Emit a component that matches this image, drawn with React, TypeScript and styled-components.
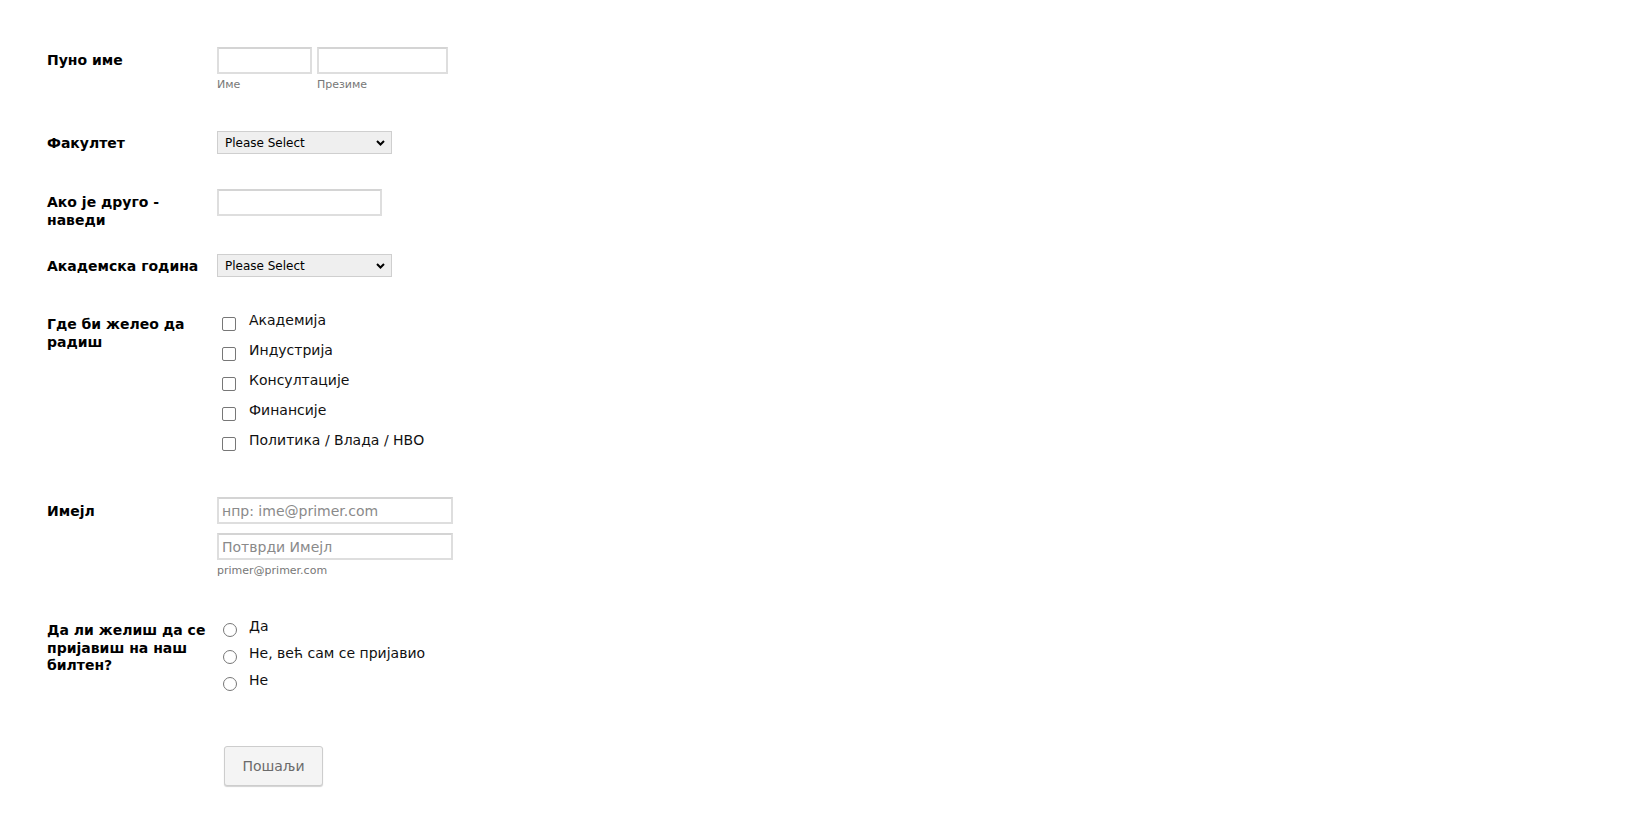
import React from "react";
import styled, { createGlobalStyle } from "styled-components";

const GlobalStyle = createGlobalStyle`
  html, body {
    margin: 0;
    padding: 0;
    background: #fff;
  }
  body {
    font-family: "DejaVu Sans", Verdana, sans-serif;
    color: #000;
  }
`;

const Form = styled.form`
  padding: 47px 0 40px 47px;
  display: flex;
  flex-direction: column;
`;

const Row = styled.div<{ $space?: number }>`
  display: flex;
  align-items: flex-start;
  margin-top: ${(p) => p.$space ?? 0}px;
`;

const Label = styled.label<{ $pad?: number }>`
  width: 160px;
  margin-right: 10px;
  padding-top: ${(p) => p.$pad ?? 5}px;
  font-size: 14px;
  line-height: 17.5px;
  font-weight: 700;
  color: #000;
`;

const Field = styled.div`
  display: flex;
  flex-direction: column;
`;

const Inline = styled.div`
  display: flex;
  gap: 5px;
`;

const Sub = styled.span`
  margin-top: 4px;
  font-size: 11px;
  line-height: 13px;
  color: #777;
`;

const TextInput = styled.input<{ $w: number }>`
  box-sizing: border-box;
  width: ${(p) => p.$w}px;
  height: 27px;
  margin: 0;
  padding: 0 3px;
  border: 2px solid #dedede;
  border-top-color: #d4d4d4;
  border-radius: 0;
  background: #fff;
  font-family: "DejaVu Sans", Verdana, sans-serif;
  font-size: 14px;
  color: #000;
  outline: none;
  &::placeholder {
    color: #8a8a8a;
  }
`;

const Stack = styled.div`
  display: flex;
  flex-direction: column;
  gap: 9px;
`;

const SelectWrap = styled.div`
  position: relative;
  width: 175px;
  height: 23px;
`;

const Select = styled.select`
  box-sizing: border-box;
  appearance: none;
  width: 100%;
  height: 100%;
  margin: 0;
  padding: 0 0 0 7px;
  border: 1px solid #cfcfcf;
  border-radius: 0;
  background: #efefef;
  font-family: "DejaVu Sans", Verdana, sans-serif;
  font-size: 12px;
  color: #000;
  outline: none;
`;

const Chevron = styled.svg`
  position: absolute;
  right: 7px;
  top: 9px;
  pointer-events: none;
`;

const Options = styled.div`
  display: flex;
  flex-direction: column;
`;

const Option = styled.label<{ $step: number }>`
  display: flex;
  align-items: flex-start;
  height: ${(p) => p.$step}px;
  font-size: 14px;
  line-height: 18px;
  color: #111;
`;

const Check = styled.span`
  box-sizing: border-box;
  flex: none;
  width: 14px;
  height: 14px;
  margin: 6px 13px 0 5px;
  border: 1px solid #777;
  border-radius: 2px;
  background: #fff;
`;

const Radio = styled.span`
  box-sizing: border-box;
  flex: none;
  width: 14px;
  height: 14px;
  margin: 6px 12px 0 6px;
  border: 1px solid #777;
  border-radius: 50%;
  background: #fff;
`;

const Submit = styled.button`
  box-sizing: border-box;
  width: 99px;
  height: 40px;
  margin-left: 7px;
  border: 1px solid #cdcdcd;
  border-radius: 3px;
  background: #f4f4f4;
  box-shadow: 0 1px 1px rgba(0, 0, 0, 0.18);
  font-family: "DejaVu Sans", Verdana, sans-serif;
  font-size: 14px;
  color: #6b6b6b;
`;

const Spacer = styled.div`
  width: 170px;
  flex: none;
`;

const DropDown: React.FC = () => (
  <SelectWrap>
    <Select defaultValue="">
      <option value="">Please Select</option>
    </Select>
    <Chevron width="9" height="6" viewBox="0 0 9 6">
      <path d="M1 1 L4.5 4.5 L8 1" fill="none" stroke="#000" strokeWidth="2" />
    </Chevron>
  </SelectWrap>
);

const jobs = [
  "Академија",
  "Индустрија",
  "Консултације",
  "Финансије",
  "Политика / Влада / НВО",
];

const news = ["Да", "Не, већ сам се пријавио", "Не"];

export default function App() {
  return (
    <>
      <GlobalStyle />
      <Form onSubmit={(e) => e.preventDefault()}>
        <Row>
          <Label>Пуно име</Label>
          <Inline>
            <Field>
              <TextInput $w={95} />
              <Sub>Име</Sub>
            </Field>
            <Field>
              <TextInput $w={131} />
              <Sub>Презиме</Sub>
            </Field>
          </Inline>
        </Row>

        <Row $space={40}>
          <Label $pad={4}>Факултет</Label>
          <DropDown />
        </Row>

        <Row $space={35}>
          <Label>Ако је друго - наведи</Label>
          <TextInput $w={165} />
        </Row>

        <Row $space={25}>
          <Label $pad={4}>Академска година</Label>
          <DropDown />
        </Row>

        <Row $space={34}>
          <Label>Где би желео да радиш</Label>
          <Options>
            {jobs.map((j) => (
              <Option key={j} $step={30}>
                <Check />
                {j}
              </Option>
            ))}
          </Options>
        </Row>

        <Row $space={36}>
          <Label $pad={6}>Имејл</Label>
          <Field>
            <Stack>
              <TextInput $w={236} placeholder="нпр: ime@primer.com" />
              <TextInput $w={236} placeholder="Потврди Имејл" />
            </Stack>
            <Sub>primer@primer.com</Sub>
          </Field>
        </Row>

        <Row $space={40}>
          <Label>Да ли желиш да се пријавиш на наш билтен?</Label>
          <Options>
            {news.map((n) => (
              <Option key={n} $step={27}>
                <Radio />
                {n}
              </Option>
            ))}
          </Options>
        </Row>

        <Row $space={48}>
          <Spacer />
          <Submit type="submit">Пошаљи</Submit>
        </Row>
      </Form>
    </>
  );
}
